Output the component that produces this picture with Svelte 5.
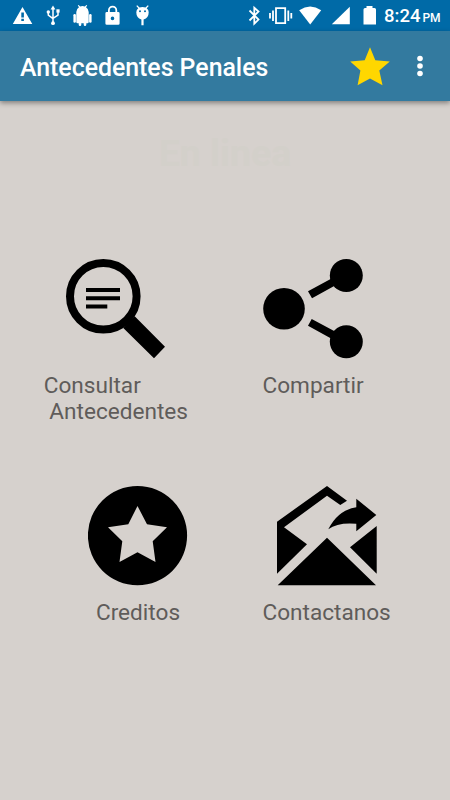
<script lang="ts">
    const title = "Antecedentes Penales";
    const time = "8:24";

    const rows = [
        [
            { icon: "search", label: "Consultar\n Antecedentes" },
            { icon: "share", label: "Compartir" },
        ],
        [
            { icon: "star", label: "Creditos" },
            { icon: "mail", label: "Contactanos" },
        ],
    ];
</script>

<div class="screen">
    <div class="status">
        <svg class="notifications" width="160" height="31" viewBox="0 0 160 31" fill="#fff">
            <path fill-rule="evenodd" d="M22.5 7 32.3 24H12.8ZM21.3 12.5h2.6v5h-2.6Zm0 6.2h2.6v2.4h-2.6Z" />
            <path fill="none" stroke="#fff" stroke-width="1.5" d="M53 8v15M48.3 12v3.2L53 18.6M58 11v4.2L53 18.4" />
            <path d="m53 5.5 2.4 4h-4.8Z" />
            <circle cx="53" cy="23.2" r="1.9" />
            <circle cx="48.3" cy="12" r="1.7" />
            <path d="M56.4 9.3h3.2v3.3h-3.2Z" />
            <path d="M76.3 12q0-3 2.7-4.7L77.8 5.6l.8-.7 1.6 1.6q2.3-.8 4.6 0l1.6-1.6.8.7L86 7.3q2.7 1.7 2.7 4.7V22q0 1.3-1.3 1.3h-1.1v1.4q0 1.2-1.3 1.2t-1.3-1.2v-1.4h-2.4v1.4q0 1.2-1.3 1.2t-1.3-1.2v-1.4h-1.1q-1.3 0-1.3-1.3Z" />
            <rect x="73.4" y="14" width="2.5" height="8.8" rx="1.2" />
            <rect x="89.1" y="14" width="2.5" height="8.8" rx="1.2" />
            <path fill-rule="evenodd" d="M106.8 12h1.2v-1.7a4.6 4.6 0 0 1 9.2 0V12h1q1.4 0 1.4 1.4v10q0 1.4-1.4 1.4h-11.4q-1.4 0-1.4-1.4v-10q0-1.4 1.4-1.4Zm3 0h5.6v-1.7a2.8 2.8 0 0 0-5.6 0Zm2.7 4.6a1.8 1.8 0 1 0 0 3.6 1.8 1.8 0 0 0 0-3.6Z" />
            <path fill-rule="evenodd" d="M136.3 12.2q0-2.4 2-4l-2-2.2.9-.7 2.3 2.3q3-1.1 6 0l2.3-2.3.9.7-2 2.2q2 1.6 2 4 0 5.6-5.1 7.4v5.6h-2.2v-5.6q-5.1-1.8-5.1-7.4Zm3.7-1.9a1 1 0 1 0 0 2 1 1 0 0 0 0-2Zm5 0a1 1 0 1 0 0 2 1 1 0 0 0 0-2Z" />
        </svg>
        <svg class="system" width="140" height="31" viewBox="240 0 140 31" fill="#fff">
            <path fill="none" stroke="#fff" stroke-width="1.8" d="m249.5 10.5 9 9.1-4.2 4V7.8l4.2 3.7-9 9" />
            <path fill="none" stroke="#fff" stroke-width="1.8" d="M276 8.2h9.2v15H276Z" />
            <path fill="none" stroke="#fff" stroke-width="1.8" d="M273 10.5V21M270 13v5.5M288.3 10.5V21M291.3 13v5.5" />
            <path d="M299.2 10.3q11-7.4 22 0L310.2 24.5Z" />
            <path d="M349.8 6.8v17.5h-18Z" />
            <path d="M366.5 6h6v2h2q1.5 0 1.5 1.5v15h-12.5v-15q0-1.5 1.5-1.5h1.5Z" />
        </svg>
        <div class="clock">
            <span class="time">{time}</span>
            <span class="period">PM</span>
        </div>
    </div>

    <header class="toolbar">
        <h1>{title}</h1>
        <svg class="favorite" width="40" height="39" viewBox="0 0 40 39">
            <path fill="#ffd700" d="m20 .3 5.3 13 14.5 1.3-10.5 9 3.2 14.7L20 31.5 7.6 38.3l2.8-14.7L.2 14.6l14.5-1.3Z" />
        </svg>
        <svg class="overflow" width="8" height="22" viewBox="0 0 8 22" fill="#fff">
            <circle cx="4" cy="3.5" r="2.8" />
            <circle cx="4" cy="11" r="2.8" />
            <circle cx="4" cy="18.5" r="2.8" />
        </svg>
    </header>

    <main>
        <h2>En linea</h2>
        {#each rows as row}
            <div class="row">
                {#each row as item}
                    <div class="item">
                        <svg width="100" height="100" viewBox="0 0 100 100">
                            {#if item.icon === "search"}
                                <circle cx="37.3" cy="37.3" r="33.3" fill="none" stroke="#000" stroke-width="8" />
                                <path d="M20 29h34v4H20ZM20 37.2h34v4H20ZM20 45.4h21.3v4H20ZM68.7 57.3 99 87.7 88 99.3 57.3 69Z" />
                            {:else if item.icon === "share"}
                                <circle cx="21" cy="49.7" r="20.8" />
                                <circle cx="83.3" cy="16.5" r="16.5" />
                                <circle cx="83.3" cy="82.8" r="16.5" />
                                <path d="m45 32.3 4 7L73 26l-4-6.7ZM48.7 60 45 66.7 69 80l4-7Z" />
                            {:else if item.icon === "star"}
                                <path fill-rule="evenodd" d="M49.5 0a49.6 49.6 0 1 0 0 99.2 49.6 49.6 0 0 0 0-99.2Zm0 20L59 38.3l20 3-14.3 14L67.5 76l-18-9.7-18 9.7 2.8-20.7-14.3-14 20.3-3Z" />
                            {:else}
                                <path d="M0 35.7 50 0l20 14.7-6.7 4.3L50 9.7 7 41.3l23 17-30 29.4ZM99.7 40v47.7L73 61.3ZM50 51.7 99 99.2H.7Z" />
                                <path d="M79.3 12.7 99.3 29l-20 16.3v-7.6Q61 36 51.3 43.3 61 24 79.3 21.3Z" />
                            {/if}
                        </svg>
                        <p>{item.label}</p>
                    </div>
                {/each}
            </div>
        {/each}
    </main>
</div>

<style>
    :global(body) {
        margin: 0;
        background: #d6d1cd;
    }

    .screen {
        height: 800px;
        overflow: hidden;
        font-family: Roboto, sans-serif;
        background: #d6d1cd;
    }

    svg {
        display: block;
        flex: none;
    }

    .status {
        display: flex;
        height: 31px;
        background: #006aa7;
    }

    .system {
        margin-left: 80px;
    }

    .clock {
        display: flex;
        align-items: baseline;
        gap: 2px;
        margin-left: 4px;
        font-weight: 500;
        line-height: 33px;
        color: #fff;
    }

    .time {
        font-size: 18.5px;
    }

    .period {
        font-size: 12px;
    }

    .toolbar {
        display: flex;
        align-items: center;
        box-sizing: border-box;
        height: 70px;
        padding: 0 26px 0 20px;
        background: #337a9f;
        box-shadow: 0 2px 5px rgb(0 0 0 / 40%);
    }

    h1 {
        flex: 1;
        margin: 4px 0 0;
        font-size: 24.85px;
        font-weight: 500;
        line-height: 30px;
        color: #fff;
    }

    .favorite {
        margin-right: 26px;
    }

    h2 {
        margin: 0;
        padding: 29px 0 82px;
        font-size: 37.5px;
        font-weight: 700;
        line-height: 47px;
        text-align: center;
        color: #d3d0ca;
    }

    .row {
        display: grid;
        grid-template-columns: 188px auto;
        column-gap: 74.5px;
        height: 227px;
    }

    .item {
        display: flex;
        flex-direction: column;
        align-items: center;
        gap: 14px;
        justify-self: start;
    }

    .item:first-child {
        justify-self: end;
    }

    p {
        margin: 0;
        font-size: 22.6px;
        line-height: 26.4px;
        color: #5f5c5a;
        white-space: pre;
    }
</style>
